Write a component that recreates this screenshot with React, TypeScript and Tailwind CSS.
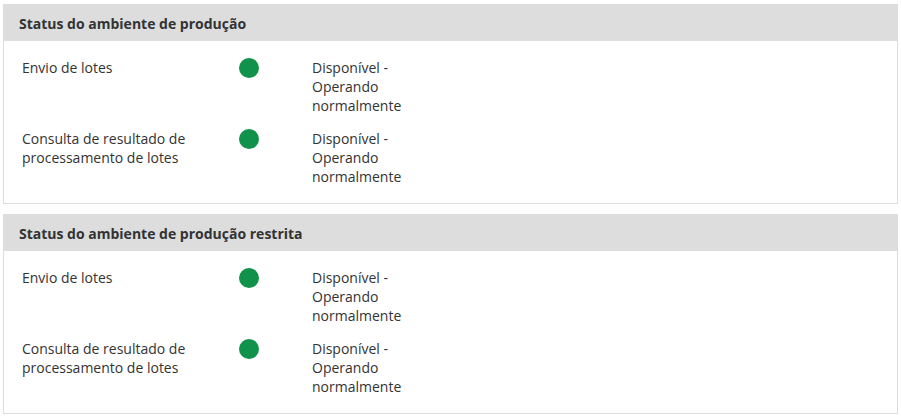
import React from "react";

const rows = [
  { label: "Envio de lotes", status: "Disponível - Operando normalmente" },
  { label: "Consulta de resultado de processamento de lotes", status: "Disponível - Operando normalmente" },
];

function Panel({ title }: { title: string }) {
  return (
    <div className="border border-[#dddddd] bg-white">
      <div className="h-[36px] bg-[#dddddd] flex items-center pl-[15px] text-[14px] font-bold text-[#333333]">
        {title}
      </div>
      <div className="pl-[18px] pt-[17px] pb-[17px] flex flex-col gap-[14px]">
        {rows.map((r, i) => (
          <div key={i} className="flex items-start text-[14px] leading-[19px] text-[#333333]">
            <div className="w-[217px] pr-[20px]">{r.label}</div>
            <div className="w-[20px] h-[20px] rounded-full bg-[#10924a] shrink-0 mt-[-0.5px]" />
            <div className="ml-[53px] w-[100px]">{r.status}</div>
          </div>
        ))}
      </div>
    </div>
  );
}

export default function App() {
  return (
    <div
      className="w-[901px] h-[416px] bg-white pl-[3px] pt-[4px] pr-[3px] flex flex-col gap-[10px]"
      style={{ fontFamily: '"Open Sans", sans-serif' }}
    >
      <Panel title="Status do ambiente de produção" />
      <Panel title="Status do ambiente de produção restrita" />
    </div>
  );
}
